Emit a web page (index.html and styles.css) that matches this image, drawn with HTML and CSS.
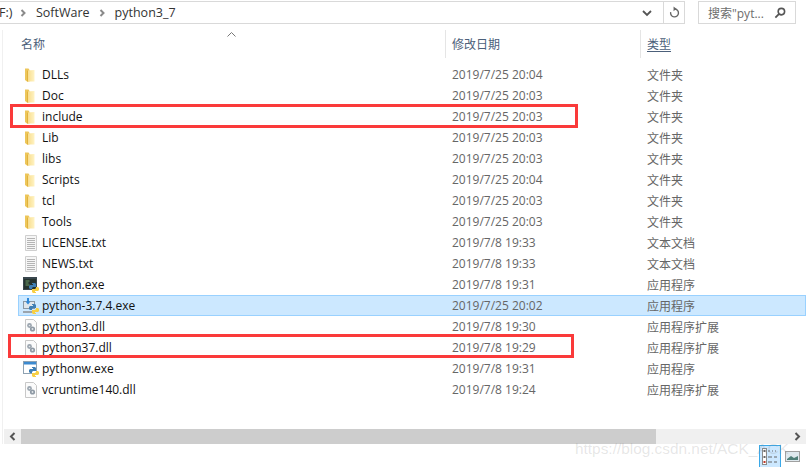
FILE: index.html
```html
<!DOCTYPE html>
<html lang="zh">
<head>
<meta charset="utf-8">
<title>python3_7</title>
<link rel="stylesheet" href="styles.css">
</head>
<body>
<svg class="defs" width="0" height="0" aria-hidden="true">
  <defs>
    <linearGradient id="fg" x1="0" x2="1" y1="0" y2="0"><stop offset="0" stop-color="#f8dc8a"/><stop offset="1" stop-color="#fff3c4"/></linearGradient>
    <symbol id="folder" viewBox="0 0 16 16">
      <path d="M2 1.500h3.500l1 1.500v11.500H4L2 13z" fill="#edc65a"/>
      <path d="M4.500 3.500l7-.5v11.500h-7z" fill="url(#fg)"/>
      <path d="M4.500 3.500v11" stroke="#e0b23c" stroke-width="1"/>
    </symbol>
    <symbol id="txt" viewBox="0 0 16 16">
      <path d="M2.500.5h11v15h-11z" fill="#f6f6f6" stroke="#cfcfcf"/>
      <path d="M4 3.500h8M4 5.500h8M4 7.500h8M4 9.500h8M4 11.500h8M4 13.500h8" stroke="#b4b4b4"/>
    </symbol>
    <symbol id="dll" viewBox="0 0 16 16">
      <path d="M2.500.5h8l3 3v12h-11z" fill="#fbfbfb" stroke="#c8c8c8"/>
      <circle cx="6.500" cy="6.500" r="2.400" fill="#9ba5af"/>
      <circle cx="9.500" cy="10" r="2.600" fill="#8f9aa5"/>
      <circle cx="6.500" cy="6.500" r=".8" fill="#e4e7ea"/>
      <circle cx="9.500" cy="10" r=".9" fill="#e4e7ea"/>
    </symbol>
    <symbol id="snake" viewBox="0 0 10 10">
      <path d="M3 0h3l1 1v3H4L3 5v1H1L0 5V3l1-1h3V1H3z" fill="#3f7fb5"/>
      <path d="M7 10H4L3 9V6h3l1-1V4h2l1 1v2L9 8H6v1h1z" fill="#f7cf45"/>
    </symbol>
    <symbol id="pyexe" viewBox="0 0 16 16">
      <rect x="0" y="0" width="14" height="13" fill="#39464d"/>
      <rect x="1" y="2" width="12" height="10" fill="#26332f"/>
      <path d="M2.500 4h4M2.500 6h3M2.500 8h4" stroke="#6f9d68"/>
      <use href="#snake" x="6" y="6" width="10" height="10"/>
    </symbol>
    <symbol id="pysetup" viewBox="0 0 16 16">
      <rect x="0.500" y="3.500" width="11" height="7" fill="#dfe6ec" stroke="#8c98a3"/>
      <path d="M0 13h9v2H0z" fill="#9aa4ad"/>
      <path d="M5 0v4" stroke="#2f88d8" stroke-width="2"/>
      <path d="M2.500 3.500h5L5 6.500z" fill="#2f88d8"/>
      <use href="#snake" x="6" y="6" width="10" height="10"/>
    </symbol>
    <symbol id="pywin" viewBox="0 0 16 16">
      <rect x="0.500" y="0.500" width="13" height="12" fill="#fff" stroke="#8fa2b2"/>
      <rect x="1" y="1" width="12" height="2.500" fill="#3c8ad0"/>
      <use href="#snake" x="6" y="6" width="10" height="10"/>
    </symbol>
  </defs>
</svg>

<div class="window">
  <header class="navbar">
    <div class="address">
      <div class="crumbs">
        <span class="crumb-text crumb-first">F:)</span>
        <svg class="chev" viewBox="0 0 6 8"><path d="M1.500 1l3 3-3 3" fill="none" stroke="#8a8a8a" stroke-width="2"/></svg>
        <span class="crumb-text">SoftWare</span>
        <svg class="chev" viewBox="0 0 6 8"><path d="M1.500 1l3 3-3 3" fill="none" stroke="#8a8a8a" stroke-width="2"/></svg>
        <span class="crumb-text">python3_7</span>
      </div>
      <div class="addr-btn addr-drop">
        <svg viewBox="0 0 10 7" width="10" height="7"><path d="M1 1l4 4 4-4" fill="none" stroke="#555" stroke-width="1.800"/></svg>
      </div>
      <div class="addr-btn addr-refresh">
        <svg viewBox="0 0 12 14" width="11" height="13"><path d="M6 3.200a4.300 4.300 0 1 1-4.200 3.500" fill="none" stroke="#666" stroke-width="1.500"/><path d="M5 .5v5l3-2.500z" fill="#666"/></svg>
      </div>
    </div>
    <div class="search">
      <span class="search-text">搜索"pyt...</span>
      <svg viewBox="0 0 13 13" width="12" height="12"><circle cx="8" cy="5" r="3.500" fill="none" stroke="#555" stroke-width="1.700"/><path d="M5.500 7.500L1.500 11.500" stroke="#555" stroke-width="2"/></svg>
    </div>
  </header>

  <main class="pane">
    <div class="headers">
      <div class="th th-name">名称<svg class="sort" viewBox="0 0 9 5" width="9" height="5"><path d="M.5 4.500l4-4 4 4" fill="none" stroke="#777"/></svg></div>
      <div class="th th-date">修改日期</div>
      <div class="th th-type"><span class="th-link">类型</span></div>
    </div>
    <div class="list">
      <div class="row"><svg class="ico"><use href="#folder"/></svg><span class="name">DLLs</span><span class="date">2019/7/25 20:04</span><span class="type">文件夹</span></div>
      <div class="row"><svg class="ico"><use href="#folder"/></svg><span class="name">Doc</span><span class="date">2019/7/25 20:03</span><span class="type">文件夹</span></div>
      <div class="row"><svg class="ico"><use href="#folder"/></svg><span class="name">include</span><span class="date">2019/7/25 20:03</span><span class="type">文件夹</span></div>
      <div class="row"><svg class="ico"><use href="#folder"/></svg><span class="name">Lib</span><span class="date">2019/7/25 20:03</span><span class="type">文件夹</span></div>
      <div class="row"><svg class="ico"><use href="#folder"/></svg><span class="name">libs</span><span class="date">2019/7/25 20:03</span><span class="type">文件夹</span></div>
      <div class="row"><svg class="ico"><use href="#folder"/></svg><span class="name">Scripts</span><span class="date">2019/7/25 20:04</span><span class="type">文件夹</span></div>
      <div class="row"><svg class="ico"><use href="#folder"/></svg><span class="name">tcl</span><span class="date">2019/7/25 20:03</span><span class="type">文件夹</span></div>
      <div class="row"><svg class="ico"><use href="#folder"/></svg><span class="name">Tools</span><span class="date">2019/7/25 20:03</span><span class="type">文件夹</span></div>
      <div class="row"><svg class="ico"><use href="#txt"/></svg><span class="name">LICENSE.txt</span><span class="date">2019/7/8 19:33</span><span class="type">文本文档</span></div>
      <div class="row"><svg class="ico"><use href="#txt"/></svg><span class="name">NEWS.txt</span><span class="date">2019/7/8 19:33</span><span class="type">文本文档</span></div>
      <div class="row"><svg class="ico"><use href="#pyexe"/></svg><span class="name">python.exe</span><span class="date">2019/7/8 19:31</span><span class="type">应用程序</span></div>
      <div class="row row-selected"><svg class="ico"><use href="#pysetup"/></svg><span class="name">python-3.7.4.exe</span><span class="date">2019/7/25 20:02</span><span class="type">应用程序</span></div>
      <div class="row"><svg class="ico"><use href="#dll"/></svg><span class="name">python3.dll</span><span class="date">2019/7/8 19:30</span><span class="type">应用程序扩展</span></div>
      <div class="row"><svg class="ico"><use href="#dll"/></svg><span class="name">python37.dll</span><span class="date">2019/7/8 19:29</span><span class="type">应用程序扩展</span></div>
      <div class="row"><svg class="ico"><use href="#pywin"/></svg><span class="name">pythonw.exe</span><span class="date">2019/7/8 19:31</span><span class="type">应用程序</span></div>
      <div class="row"><svg class="ico"><use href="#dll"/></svg><span class="name">vcruntime140.dll</span><span class="date">2019/7/8 19:24</span><span class="type">应用程序扩展</span></div>
    </div>
    <div class="hscroll">
      <div class="sb-btn"><svg viewBox="0 0 7 9" width="7" height="9"><path d="M5.500 1L2 4.500 5.500 8" fill="none" stroke="#555" stroke-width="2"/></svg></div>
      <div class="sb-thumb"></div>
      <div class="sb-track"></div>
      <div class="sb-btn sb-right"><svg viewBox="0 0 7 9" width="7" height="9"><path d="M1.500 1L5 4.500 1.500 8" fill="none" stroke="#555" stroke-width="2"/></svg></div>
    </div>
  </main>

  <footer class="status">
    <div class="view view-active">
      <svg viewBox="0 0 18 18" width="18" height="18">
        <rect x="1.500" y=".5" width="4" height="16" fill="#fff" stroke="#8a8a8a"/>
        <rect x="2.500" y="2" width="2" height="2" fill="#666"/><rect x="2.500" y="8" width="2" height="2" fill="#666"/><rect x="2.500" y="13" width="2" height="2" fill="#c0392b"/>
        <path d="M7 3h2m2 0h1m2 0h1M7 9h4m2 0h3M7 14h4m2 0h3" stroke="#666"/>
      </svg>
    </div>
    <div class="view">
      <svg viewBox="0 0 15 11" width="15" height="11">
        <rect x=".5" y=".5" width="14" height="10" fill="#dfe9ee" stroke="#a0a0a0"/>
        <path d="M2 8l4-3 3 2 4-2v4H2z" fill="#4f7f78"/>
      </svg>
    </div>
  </footer>

  <div class="mark mark-a"></div>
  <div class="mark mark-b"></div>
  <div class="watermark">https://blog.csdn.net/ACK_ACK</div>
</div>
</body>
</html>
```

FILE: styles.css
```css
* { box-sizing: border-box; }
html, body { margin: 0; padding: 0; background: #fff; }
.defs { position: absolute; }
.window {
  position: relative;
  width: 806px;
  height: 467px;
  overflow: hidden;
  background: #fff;
  font-family: "Open Sans", "Noto Sans CJK SC", sans-serif;
  font-size: 12px;
  color: #111;
}
.navbar {
  display: flex;
  height: 30px;
  padding-top: 1px;
  gap: 13px;
}
.address {
  display: flex;
  align-items: stretch;
  width: 685px;
  height: 23px;
  border: 1px solid #d9d9d9;
  border-left: 0;
}
.crumbs {
  flex: 1;
  display: flex;
  align-items: center;
  font-size: 12.5px;
  color: #333;
}
.chev { width: 6px; height: 8px; margin-right: 9.5px; }
.crumb-text { margin-right: 9.5px; }
.crumb-first { margin-right: 8px; margin-left: -1px; }
.addr-btn { display: flex; align-items: center; justify-content: center; }
.addr-drop { width: 32px; padding-top: 2px; }
.addr-refresh { width: 21px; border-left: 1px solid #d9d9d9; }
.search {
  display: flex;
  align-items: center;
  justify-content: space-between;
  width: 98px;
  height: 23px;
  padding: 0 9px;
  border: 1px solid #d9d9d9;
  color: #6d6d6d;
}
.pane {
  height: 414px;
  margin-left: 2px;
  border-left: 1px solid #f0f0f0;
  display: flex;
  flex-direction: column;
}
.headers {
  display: flex;
  flex: none;
  height: 34px;
  color: #4c607a;
}
.th {
  display: flex;
  align-items: center;
  height: 28px;
}
.th-name { position: relative; width: 442px; padding-left: 18px; }
.sort { position: absolute; left: 224px; top: 2px; }
.th-date { width: 195px; padding-left: 6px; border-left: 1px solid #e5e5e5; }
.th-type { flex: 1; padding-left: 6px; border-left: 1px solid #e5e5e5; }
.th-link { text-decoration: underline; text-underline-offset: 2px; }
.list { flex: 1; display: flex; flex-direction: column; padding-left: 15px; }
.row {
  display: grid;
  grid-template-columns: 23px 410px 195px 1fr;
  align-items: center;
  height: 21px;
  flex: none;
  border: 1px solid transparent;
}
.ico { width: 16px; height: 16px; margin-left: 4px; }
.date, .type { color: #666; }
.row-selected { background: #cce8ff; border-color: #99d1ff; }
.hscroll {
  display: flex;
  height: 15px;
  margin-left: 1px;
  flex: none;
  background: #f0f0f0;
}
.sb-btn { width: 17px; display: flex; align-items: center; justify-content: center; background: #f0f0f0; }
.sb-thumb { width: 635px; background: #cdcdcd; }
.sb-track { flex: 1; }
.status {
  display: flex;
  height: 23px;
  justify-content: flex-end;
  padding: 1px 3px 0 0;
}
.view { width: 22px; height: 22px; display: flex; align-items: center; justify-content: center; }
.view-active { background: #cce8ff; border: 1px solid #3aa8e8; border-bottom: 0; }
.mark { position: absolute; border: 3px solid #fa3a3a; }
.mark-a { left: 10px; top: 104px; width: 568px; height: 24px; }
.mark-b { left: 8px; top: 334px; width: 566px; height: 24px; }
.watermark {
  position: absolute;
  left: 575px;
  top: 440px;
  font-family: "Liberation Sans", sans-serif;
  font-size: 15.4px;
  color: rgba(130, 130, 130, 0.2);
  white-space: nowrap;
}
```
